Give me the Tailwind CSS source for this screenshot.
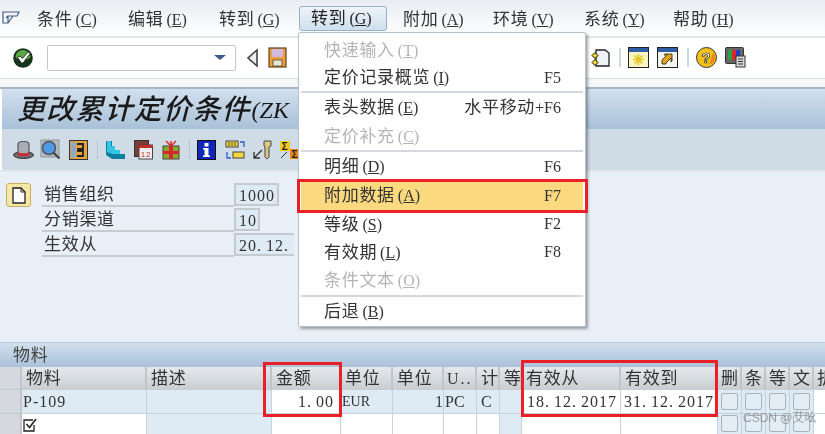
<!DOCTYPE html>
<html lang="zh">
<head>
    <meta charset="UTF-8">
    <title>更改累计定价条件</title>
    <script src="https://cdn.jsdelivr.net/npm/@tailwindcss/browser@4"></script>
</head>
<body class="bg-white">
<div class="relative w-[825px] h-[434px] overflow-hidden bg-white text-[17px] leading-none tracking-[0.7px] text-[#333] blur-[0.3px] [font-family:'Liberation_Serif','Noto_Sans_CJK_SC',serif]">

    <!-- menu bar -->
    <div class="flex items-center h-[38px] pt-[2px] bg-gradient-to-b from-[#e9edf1] to-white border-b-2 border-[#e3e7eb]">
        <svg class="ml-[2px] mr-[17px] mb-[2px]" width="18" height="14" viewBox="0 0 18 14" fill="none" stroke="#3f5f86" stroke-width="1.2"><path d="M1 1h16l-2 4H6v7H1zM6 5l-2 2M6 12l5-7"/></svg>
        <div class="w-[91px]">条件<span class="ml-[3px] text-[16px] tracking-normal">(<u>C</u>)</span></div>
        <div class="w-[91px]">编辑<span class="ml-[3px] text-[16px] tracking-normal">(<u>E</u>)</span></div>
        <div class="w-[92px]">转到<span class="ml-[3px] text-[16px] tracking-normal">(<u>G</u>)</span></div>
        <div class="w-[92px] text-[#222]">转到<span class="ml-[3px] text-[16px] tracking-normal">(<u>G</u>)</span></div>
        <div class="w-[90px]">附加<span class="ml-[3px] text-[16px] tracking-normal">(<u>A</u>)</span></div>
        <div class="w-[91px]">环境<span class="ml-[3px] text-[16px] tracking-normal">(<u>V</u>)</span></div>
        <div class="w-[89px]">系统<span class="ml-[3px] text-[16px] tracking-normal">(<u>Y</u>)</span></div>
        <div>帮助<span class="ml-[3px] text-[16px] tracking-normal">(<u>H</u>)</span></div>
    </div>

    <!-- system toolbar -->
    <div class="flex items-center h-[41px] pb-[1px] bg-white border-b border-[#d9dfe5]">
        <svg class="ml-[13px]" width="20" height="20" viewBox="0 0 20 20"><circle cx="10" cy="10" r="9.800" fill="#17351a"/><path d="M2.500 9a7.500 7 0 0 1 15 0c-2 4-13 4-15 0z" fill="#58a845"/><path d="M4.500 9.500l2.500-1.500 2.500 2.500L15 4l2.500 1-7.500 10h-1.500z" fill="#fff" stroke="#111" stroke-width=".8"/></svg>
        <div class="ml-[14px] flex items-center justify-end w-[189px] h-[26px] pr-[9px] bg-white border border-[#c4c8cc] rounded-[2px]">
            <div class="w-0 h-0 border-x-[6px] border-x-transparent border-t-[5px] border-t-[#3c5a86]"></div>
        </div>
        <svg class="ml-[10px]" width="13" height="20" viewBox="0 0 13 20"><path d="M11 2v16L2 10z" fill="#eceff1" stroke="#444" stroke-width="1.600"/></svg>
        <svg class="ml-[9px]" width="19" height="21" viewBox="0 0 19 21"><rect x="1" y="1" width="17" height="19" fill="#e8a040" stroke="#5f4418" stroke-width="1.200"/><rect x="4" y="2" width="11" height="8" fill="#d5b8e0"/><rect x="5" y="13" width="9" height="6" fill="#e9e6dc" stroke="#5f4418" stroke-width=".8"/></svg>
        <svg class="ml-[303px]" width="20" height="20" viewBox="0 0 20 20"><path d="M6 2h9l4 3v13H6z" fill="#eef2f6" stroke="#222" stroke-width="1.300"/><path d="M2 7.500l3-3 3 3-3 3zM2 14.500l3-3 3 3-3 3z" fill="#f2da2c" stroke="#111"/></svg>
        <div class="ml-[9px] w-[2px] h-[19px] bg-[#cddbe7]"></div>
        <svg class="ml-[7px]" width="21" height="21" viewBox="0 0 21 21"><rect x=".5" y=".5" width="20" height="20" fill="#fbf5c4" stroke="#222"/><rect x="1" y="1" width="19" height="4" fill="#2f5da8"/><path d="M10.500 7v11M5 12.500h11M6.500 8.500l8 8M14.500 8.500l-8 8" stroke="#e3c61f" stroke-width="1.600"/></svg>
        <svg class="ml-[8px]" width="21" height="21" viewBox="0 0 21 21"><rect x=".5" y=".5" width="20" height="20" fill="#f4f4ea" stroke="#222"/><rect x="1" y="1" width="19" height="4" fill="#2f5da8"/><path d="M5 17v-4l5-5H7l1-1h7v7l-1 1v-4l-5 5v1z" fill="#e5a516" stroke="#222" stroke-width=".8"/></svg>
        <div class="ml-[9px] w-[2px] h-[19px] bg-[#cddbe7]"></div>
        <svg class="ml-[7px]" width="21" height="21" viewBox="0 0 21 21"><circle cx="10.500" cy="10.500" r="10" fill="#f2c21a" stroke="#333"/><path d="M17 5a9 9 0 0 1 0 11l-4 2z" fill="#ea8a1c"/><text x="10.500" y="16" text-anchor="middle" font-size="15" font-weight="700" fill="#fff" stroke="#222" stroke-width=".7" font-family="Liberation Sans">?</text></svg>
        <svg class="ml-[8px]" width="21" height="21" viewBox="0 0 21 21"><rect x="0.500" y=".5" width="18" height="16" rx="1" fill="#666" stroke="#333"/><rect x="3" y="3" width="4" height="10" fill="#2f9e44"/><rect x="7" y="3" width="4" height="10" fill="#d8262c"/><rect x="11" y="3" width="4" height="10" fill="#1c3ec8"/><rect x="11" y="9" width="9" height="11" fill="#d9d9d9" stroke="#333"/><path d="M13 12h5M13 14.500h5M13 17h5" stroke="#333"/></svg>
    </div>

    <div class="h-[10px] bg-[#f5f7f9] border-b-2 border-[#aab6c6]"></div>

    <!-- title bar -->
    <div class="flex items-center h-[40px] ml-[2px] pl-[15px] pt-[1px] bg-gradient-to-b from-[#d2e0ee] to-[#a9c1d8] whitespace-nowrap text-[28px] tracking-[1.200px] italic font-medium text-[#1a1a1a]">更改累计定价条件<span class="ml-[1px] text-[24px] font-normal tracking-normal">(ZK</span></div>

    <!-- application toolbar -->
    <div class="flex items-center h-[41px] ml-[2px] bg-[#cfdbe5]">
        <svg class="ml-[11px]" width="21" height="20" viewBox="0 0 21 20"><ellipse cx="10.500" cy="15" rx="10" ry="3.500" fill="#6a6a70" stroke="#333"/><path d="M5 14V3c2-2 9-2 11 0v11z" fill="#a8acb4" stroke="#444"/><path d="M5 12c3 2 8 2 11 0v3c-3 1.500-8 1.500-11 0z" fill="#d8262c"/></svg>
        <svg class="ml-[6px]" width="21" height="21" viewBox="0 0 21 21"><rect x="1" y="1" width="18" height="17" fill="#b3bcc5" stroke="#8a939b"/><circle cx="9" cy="9" r="6.500" fill="#4d9be8" stroke="#555" stroke-width="1.600"/><path d="M13.500 13.500l6 6" stroke="#444" stroke-width="2.200"/></svg>
        <svg class="ml-[8px]" width="19" height="20" viewBox="0 0 19 20"><rect x=".5" y=".5" width="18" height="19" fill="#e3a33e" stroke="#333"/><rect x="2" y="2" width="5" height="16" fill="#8fa8c4"/><path d="M8 4h6v5H9v2h5v5H8" fill="none" stroke="#222" stroke-width="1.800"/></svg>
        <div class="ml-[9px] w-[1px] h-[19px] bg-[#b4c5d5]"></div>
        <svg class="ml-[7px]" width="21" height="20" viewBox="0 0 21 20"><path d="M1 1h6v13h13v5H7l-6-4z" fill="#0f7fa0"/><path d="M2 1h4v5h4v4h5v4H8L2 12z" fill="#35c4e6"/></svg>
        <svg class="ml-[8px]" width="19" height="20" viewBox="0 0 19 20"><rect x=".5" y=".5" width="14" height="16" fill="#7c3a3a" stroke="#333"/><rect x="5" y="5" width="13.500" height="14" fill="#f4eeee" stroke="#444"/><rect x="5" y="5" width="13.500" height="3" fill="#c42a2a"/><text x="12" y="17" text-anchor="middle" font-size="8" fill="#c42a2a" font-family="Liberation Sans">12</text></svg>
        <svg class="ml-[9px]" width="18" height="20" viewBox="0 0 18 20"><rect x="1" y="6" width="16" height="13" fill="#8aa82a" stroke="#444"/><rect x="7" y="6" width="4" height="13" fill="#d8262c"/><rect x="1" y="11" width="16" height="3" fill="#d8262c"/><path d="M9 6L4 1M9 6l5-5M9 6V1" stroke="#d8262c" stroke-width="1.500"/></svg>
        <div class="ml-[9px] w-[1px] h-[19px] bg-[#b4c5d5]"></div>
        <svg class="ml-[7px]" width="19" height="20" viewBox="0 0 19 20"><rect x=".5" y=".5" width="18" height="19" fill="#1027b8" stroke="#111"/><rect x="7.500" y="3" width="4" height="3.500" fill="#fff"/><path d="M6 8h5.500v7.500H13V17H6v-1.500h1.500V9.500H6z" fill="#fff"/></svg>
        <svg class="ml-[9px]" width="20" height="20" viewBox="0 0 20 20"><rect x="1" y="1" width="12" height="6" fill="#f4d83a" stroke="#444"/><path d="M4 2v4M7 2v4M10 2v4" stroke="#444"/><rect x="8" y="12" width="11" height="6" fill="#f4d83a" stroke="#444"/><path d="M15 2h4v5M2 12v6h4" fill="none" stroke="#2a5fd0" stroke-width="1.300"/></svg>
        <svg class="ml-[7px]" width="20" height="20" viewBox="0 0 20 20"><path d="M12 1h7v5l-2 1v10l-2 2-2-2V7l-1-1z" fill="#dcc886" stroke="#444"/><path d="M2 18l8-8M2 12v6h6" fill="none" stroke="#333" stroke-width="1.300"/></svg>
        <svg class="ml-[7px]" width="22" height="20" viewBox="0 0 22 20"><rect x="1" y="1" width="10" height="10" fill="#efc81e"/><text x="6" y="10" text-anchor="middle" font-size="10" font-weight="700" fill="#222" font-family="Liberation Sans">Σ</text><rect x="11" y="9" width="10" height="10" fill="#e8861a"/><text x="16" y="18" text-anchor="middle" font-size="10" font-weight="700" fill="#222" font-family="Liberation Sans">Σ</text><path d="M2 18l6-6" stroke="#333"/></svg>
    </div>

    <!-- header form -->
    <div class="flex h-[172px] pt-[11px] bg-[#e8eff6] border-t-2 border-[#dfe6ed]">
        <div class="flex items-center justify-center ml-[6px] w-[25px] h-[24px] bg-[#f6e7a4] border border-[#c9ad62] rounded-[3px]">
            <svg width="14" height="17" viewBox="0 0 14 17"><path d="M1 1h8l4 4v11H1z" fill="#fff" stroke="#222" stroke-width="1.300"/><path d="M9 1v4h4" fill="none" stroke="#222"/></svg>
        </div>
        <div class="ml-[11px] flex flex-col w-[255px]">
            <div class="flex items-start h-[25px]">
                <div class="w-[192px] h-[24px] pl-[2px] leading-[24px] border-b-2 border-[#c6ccd2]">销售组织</div>
                <div class="w-[45px] h-[23px] pl-[3px] leading-[21px] text-[16px] tracking-[1px] bg-[#deeaf4] border-2 border-[#c4cad0]">1000</div>
            </div>
            <div class="flex items-start h-[25px]">
                <div class="w-[192px] h-[24px] pl-[2px] leading-[24px] border-b-2 border-[#c6ccd2]">分销渠道</div>
                <div class="w-[26px] h-[23px] pl-[3px] leading-[21px] text-[16px] tracking-[1px] bg-[#deeaf4] border-2 border-[#c4cad0]">10</div>
            </div>
            <div class="flex items-start h-[25px]">
                <div class="w-[192px] h-[24px] pl-[2px] leading-[24px] border-b-2 border-[#c6ccd2]">生效从</div>
                <div class="w-[60px] h-[23px] pl-[3px] leading-[21px] text-[16px] tracking-[1px] bg-[#deeaf4] border-2 border-r-0 border-[#c4cad0]">20<span class="mr-[4px]">.</span>12<span>.</span></div>
            </div>
        </div>
    </div>

    <!-- table section -->
    <div class="flex items-center h-[25px] pl-[13px] bg-gradient-to-b from-[#d2e0ee] to-[#a9c1d8] border-t border-[#bccbda] text-[#444]">物料</div>
    <div class="grid grid-cols-[22px_125px_125px_69px_52px_51px_33px_23px_22px_99px_97px_24px_24px_24px_24px_1fr] grid-rows-[23px_24px_20px] text-[#333]">
        <div class="bg-[#d5d9dd] border-r-2 border-b border-[#bfc6cc]"></div>
        <div class="pl-[4px] leading-[23px] whitespace-nowrap overflow-hidden bg-gradient-to-b from-[#e6e9ec] to-[#c8cdd1] border-r-2 border-[#bfc5cb]">物料</div>
        <div class="pl-[4px] leading-[23px] whitespace-nowrap overflow-hidden bg-gradient-to-b from-[#e6e9ec] to-[#c8cdd1] border-r-2 border-[#bfc5cb]">描述</div>
        <div class="pl-[4px] leading-[23px] whitespace-nowrap overflow-hidden bg-gradient-to-b from-[#e6e9ec] to-[#c8cdd1] border-r-2 border-[#bfc5cb]">金额</div>
        <div class="pl-[4px] leading-[23px] whitespace-nowrap overflow-hidden bg-gradient-to-b from-[#e6e9ec] to-[#c8cdd1] border-r-2 border-[#bfc5cb]">单位</div>
        <div class="pl-[4px] leading-[23px] whitespace-nowrap overflow-hidden bg-gradient-to-b from-[#e6e9ec] to-[#c8cdd1] border-r-2 border-[#bfc5cb]">单位</div>
        <div class="pl-[3px] leading-[23px] text-[16px] tracking-[2px] whitespace-nowrap overflow-hidden bg-gradient-to-b from-[#e6e9ec] to-[#c8cdd1] border-r-2 border-[#bfc5cb]">U..</div>
        <div class="pl-[4px] leading-[23px] whitespace-nowrap overflow-hidden bg-gradient-to-b from-[#e6e9ec] to-[#c8cdd1] border-r-2 border-[#bfc5cb]">计</div>
        <div class="pl-[4px] leading-[23px] whitespace-nowrap overflow-hidden bg-gradient-to-b from-[#e6e9ec] to-[#c8cdd1] border-r-2 border-[#bfc5cb]">等</div>
        <div class="pl-[4px] leading-[23px] whitespace-nowrap overflow-hidden bg-gradient-to-b from-[#e6e9ec] to-[#c8cdd1] border-r-2 border-[#bfc5cb]">有效从</div>
        <div class="pl-[4px] leading-[23px] whitespace-nowrap overflow-hidden bg-gradient-to-b from-[#e6e9ec] to-[#c8cdd1] border-r-2 border-[#bfc5cb]">有效到</div>
        <div class="pl-[3px] leading-[23px] whitespace-nowrap overflow-hidden bg-gradient-to-b from-[#e6e9ec] to-[#c8cdd1] border-r-2 border-[#bfc5cb]">删</div>
        <div class="pl-[3px] leading-[23px] whitespace-nowrap overflow-hidden bg-gradient-to-b from-[#e6e9ec] to-[#c8cdd1] border-r-2 border-[#bfc5cb]">条</div>
        <div class="pl-[3px] leading-[23px] whitespace-nowrap overflow-hidden bg-gradient-to-b from-[#e6e9ec] to-[#c8cdd1] border-r-2 border-[#bfc5cb]">等</div>
        <div class="pl-[3px] leading-[23px] whitespace-nowrap overflow-hidden bg-gradient-to-b from-[#e6e9ec] to-[#c8cdd1] border-r-2 border-[#bfc5cb]">文</div>
        <div class="pl-[3px] leading-[23px] whitespace-nowrap overflow-hidden bg-gradient-to-b from-[#e6e9ec] to-[#c8cdd1]">折</div>

        <div class="bg-[#d5d9dd] border-r-2 border-b border-[#bfc6cc]"></div>
        <div class="pl-[1px] leading-[24px] text-[16px] tracking-[1px] bg-[#deeaf4] border-r border-b border-[#c6d3de]">P-109</div>
        <div class="bg-[#deeaf4] border-r border-b border-[#c6d3de]"></div>
        <div class="pr-[6px] text-right leading-[24px] text-[16px] tracking-[1px] bg-white border-r border-b border-[#c6d3de]">1<span class="mr-[4px]">.</span>00</div>
        <div class="pl-[1px] leading-[24px] text-[14px] tracking-normal bg-[#deeaf4] border-r border-b border-[#c6d3de]">EUR</div>
        <div class="text-right leading-[24px] text-[16px] tracking-normal bg-[#deeaf4] border-r border-b border-[#c6d3de]">1</div>
        <div class="pl-[1px] leading-[24px] text-[16px] tracking-normal bg-[#deeaf4] border-r border-b border-[#c6d3de]">PC</div>
        <div class="pl-[4px] leading-[24px] text-[16px] tracking-normal bg-[#deeaf4] border-r border-b border-[#c6d3de]">C</div>
        <div class="bg-[#deeaf4] border-r border-b border-[#c6d3de]"></div>
        <div class="pl-[5px] leading-[24px] text-[16px] tracking-[1px] bg-white border-r border-b border-[#c6d3de]">18<span class="mr-[4px]">.</span>12<span class="mr-[4px]">.</span>2017</div>
        <div class="pl-[3px] leading-[24px] text-[16px] tracking-[1px] bg-white border-r border-b border-[#c6d3de]">31<span class="mr-[4px]">.</span>12<span class="mr-[4px]">.</span>2017</div>
        <div class="flex items-center justify-center bg-[#deeaf4] border-r border-b border-[#c6d3de]"><div class="w-[17px] h-[17px] bg-[#e3edf6] border border-[#aab2ba] rounded-[2px]"></div></div>
        <div class="flex items-center justify-center bg-[#deeaf4] border-r border-b border-[#c6d3de]"><div class="w-[17px] h-[17px] bg-[#e3edf6] border border-[#aab2ba] rounded-[2px]"></div></div>
        <div class="flex items-center justify-center bg-[#deeaf4] border-r border-b border-[#c6d3de]"><div class="w-[17px] h-[17px] bg-[#e3edf6] border border-[#aab2ba] rounded-[2px]"></div></div>
        <div class="flex items-center justify-center bg-[#deeaf4] border-r border-b border-[#c6d3de]"><div class="w-[17px] h-[17px] bg-[#e3edf6] border border-[#aab2ba] rounded-[2px]"></div></div>
        <div class="bg-white border-b border-[#c6d3de]"></div>

        <div class="bg-[#d5d9dd] border-r-2 border-[#bfc6cc]"></div>
        <div class="pl-[1px] pt-[4px] bg-white border-r border-[#c6d3de]"><svg width="14" height="14" viewBox="0 0 14 14" fill="none" stroke="#222" stroke-width="1.300"><path d="M10 2H1v11h10V7"/><path d="M3.500 6l3 3.500L13 1" stroke-width="1.600"/></svg></div>
        <div class="bg-[#deeaf4] border-r border-[#c6d3de]"></div>
        <div class="bg-white border-r border-[#c6d3de]"></div>
        <div class="bg-white border-r border-[#c6d3de]"></div>
        <div class="bg-white border-r border-[#c6d3de]"></div>
        <div class="bg-white border-r border-[#c6d3de]"></div>
        <div class="bg-white border-r border-[#c6d3de]"></div>
        <div class="bg-[#deeaf4] border-r border-[#c6d3de]"></div>
        <div class="bg-white border-r border-[#c6d3de]"></div>
        <div class="bg-white border-r border-[#c6d3de]"></div>
        <div class="flex justify-center pt-[1px] bg-[#deeaf4] border-r border-[#c6d3de]"><div class="w-[17px] h-[17px] bg-[#e3edf6] border border-[#aab2ba] rounded-[2px]"></div></div>
        <div class="flex justify-center pt-[1px] bg-[#deeaf4] border-r border-[#c6d3de]"><div class="w-[17px] h-[17px] bg-[#e3edf6] border border-[#aab2ba] rounded-[2px]"></div></div>
        <div class="flex justify-center pt-[1px] bg-[#deeaf4] border-r border-[#c6d3de]"><div class="w-[17px] h-[17px] bg-[#e3edf6] border border-[#aab2ba] rounded-[2px]"></div></div>
        <div class="flex justify-center pt-[1px] bg-[#deeaf4] border-r border-[#c6d3de]"><div class="w-[17px] h-[17px] bg-[#e3edf6] border border-[#aab2ba] rounded-[2px]"></div></div>
        <div class="bg-white"></div>
    </div>

    <!-- pressed menu button -->
    <div class="absolute left-[299px] top-[6px] w-[88px] h-[25px] bg-gradient-to-b from-[#eef3f8] to-[#cfe0ef] border border-[#9cb0c4] rounded-[3px] pl-[11px] leading-[24px] text-[#222]">转到<span class="ml-[3px] text-[16px] tracking-normal">(<u>G</u>)</span></div>

    <!-- dropdown -->
    <div class="absolute left-[298px] top-[32px] w-[288px] h-[295px] pt-[3px] bg-white border border-[#b6c4d2] rounded-[2px] shadow-[2px_2px_3px_rgba(0,0,0,0.35)]">
        <div class="flex justify-between items-center h-[28px] pl-[25px] pr-[24px] text-[#b4b4b4]"><div>快速输入<span class="ml-[3px] text-[16px] tracking-normal">(<u>T</u>)</span></div></div>
        <div class="flex justify-between items-center h-[27px] pl-[25px] pr-[24px]"><div>定价记录概览<span class="ml-[3px] text-[16px] tracking-normal">(<u>I</u>)</span></div><div class="text-[16px] tracking-normal">F5</div></div>
        <div class="h-[2px] mx-[2px] bg-[#d5d9dd]"></div>
        <div class="flex justify-between items-center h-[29px] pl-[25px] pr-[24px]"><div>表头数据<span class="ml-[3px] text-[16px] tracking-normal">(<u>E</u>)</span></div><div>水平移动<span class="text-[16px] tracking-normal">+F6</span></div></div>
        <div class="flex justify-between items-center h-[28px] pl-[25px] pr-[24px] text-[#b4b4b4]"><div>定价补充<span class="ml-[3px] text-[16px] tracking-normal">(<u>C</u>)</span></div></div>
        <div class="h-[2px] mx-[2px] bg-[#d5d9dd]"></div>
        <div class="flex justify-between items-center h-[29px] pl-[25px] pr-[24px]"><div>明细<span class="ml-[3px] text-[16px] tracking-normal">(<u>D</u>)</span></div><div class="text-[16px] tracking-normal">F6</div></div>
        <div class="flex justify-between items-center h-[29px] mx-[2px] pl-[23px] pr-[22px] bg-[#fbda7f]"><div>附加数据<span class="ml-[3px] text-[16px] tracking-normal">(<u>A</u>)</span></div><div class="text-[16px] tracking-normal">F7</div></div>
        <div class="flex justify-between items-center h-[28px] pl-[25px] pr-[24px]"><div>等级<span class="ml-[3px] text-[16px] tracking-normal">(<u>S</u>)</span></div><div class="text-[16px] tracking-normal">F2</div></div>
        <div class="flex justify-between items-center h-[28px] pl-[25px] pr-[24px]"><div>有效期<span class="ml-[3px] text-[16px] tracking-normal">(<u>L</u>)</span></div><div class="text-[16px] tracking-normal">F8</div></div>
        <div class="flex justify-between items-center h-[29px] pl-[25px] pr-[24px] text-[#b4b4b4]"><div>条件文本<span class="ml-[3px] text-[16px] tracking-normal">(<u>O</u>)</span></div></div>
        <div class="h-[2px] mx-[2px] bg-[#d5d9dd]"></div>
        <div class="flex justify-between items-center h-[28px] pl-[25px] pr-[24px]"><div>后退<span class="ml-[3px] text-[16px] tracking-normal">(<u>B</u>)</span></div></div>
    </div>

    <!-- red annotation boxes -->
    <div class="absolute left-[297px] top-[179px] w-[291px] h-[34px] border-[3px] border-[#ea2029]"></div>
    <div class="absolute left-[263px] top-[362px] w-[79px] h-[55px] border-[3px] border-[#ea2029]"></div>
    <div class="absolute left-[521px] top-[360px] w-[197px] h-[57px] border-[3px] border-[#ea2029]"></div>

    <!-- watermark -->
    <div class="absolute left-[743px] top-[412px] text-[12px] tracking-normal text-[#888]/80 [font-family:'Liberation_Sans','Noto_Sans_CJK_SC',sans-serif]">CSDN @艾吆</div>
</div>
</body>
</html>
